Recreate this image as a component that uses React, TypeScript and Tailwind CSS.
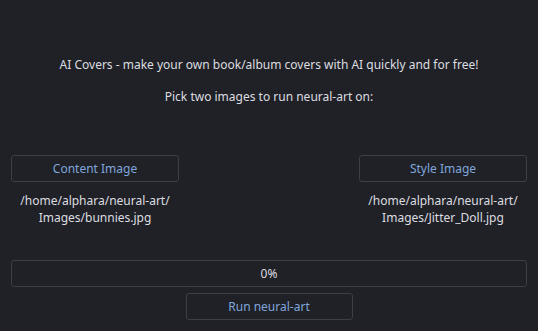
export default function App() {
  const font = { fontFamily: '"Noto Sans", sans-serif' };
  return (
    <div
      className="w-[538px] h-[331px] bg-[#202126] text-[#dcdde0] text-[12px] flex flex-col px-[11px] overflow-hidden"
      style={font}
    >
      <div className="h-[56px]" />
      <div className="text-center leading-[18px]">
        AI Covers - make your own book/album covers with AI quickly and for free!
      </div>
      <div className="h-[14px]" />
      <div className="text-center leading-[18px]">Pick two images to run neural-art on:</div>
      <div className="h-[49px]" />
      <div className="flex justify-between">
        <div className="flex flex-col items-center w-[168px]">
          <button className="w-full h-[27px] border border-[#3e3f44] rounded-[3px] text-[#7fa6dc] leading-none">
            Content Image
          </button>
          <div className="mt-[10px] text-center leading-[17px]">
            /home/alphara/neural-art/
            <br />
            Images/bunnies.jpg
          </div>
        </div>
        <div className="flex flex-col items-center w-[168px]">
          <button className="w-full h-[27px] border border-[#3e3f44] rounded-[3px] text-[#7fa6dc] leading-none">
            Style Image
          </button>
          <div className="mt-[10px] text-center leading-[17px]">
            /home/alphara/neural-art/
            <br />
            Images/Jitter_Doll.jpg
          </div>
        </div>
      </div>
      <div className="h-[34px]" />
      <div className="h-[27px] w-[516px] border border-[#3e3f44] rounded-[3px] flex items-center justify-center leading-none">
        0%
      </div>
      <div className="h-[6px]" />
      <div className="flex justify-center">
        <button className="w-[167px] h-[27px] border border-[#3e3f44] rounded-[3px] text-[#7fa6dc] leading-none">
          Run neural-art
        </button>
      </div>
    </div>
  );
}
